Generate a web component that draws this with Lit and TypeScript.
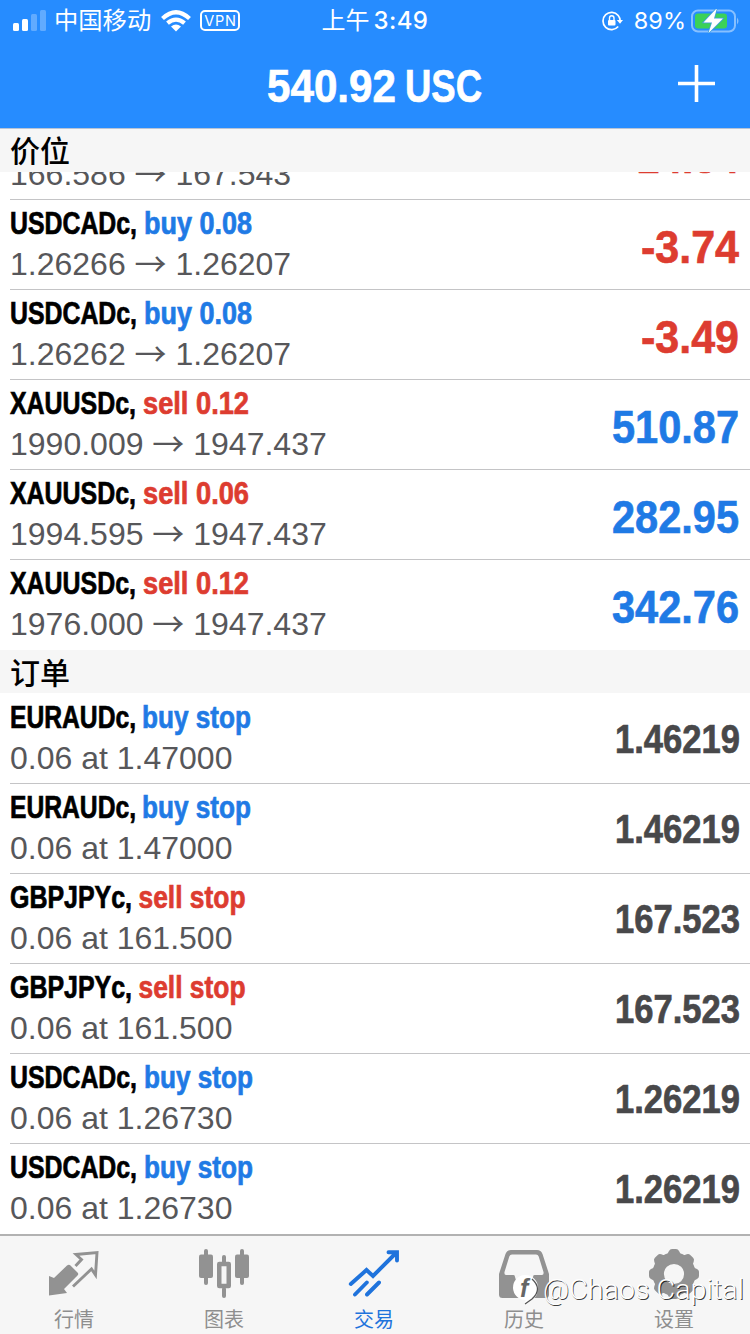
import { LitElement, html, svg, css } from "lit";
import { customElement, property } from "lit/decorators.js";

type Run = { t: string; x: number; w: number; c?: string };

// Condensed bold text: each run is squeezed to its own width.
@customElement("narrow-text")
class NarrowText extends LitElement {
  @property({ attribute: false }) runs: Run[] = [];
  @property({ type: Number }) size = 31;
  @property({ type: Number }) width = 260;
  static styles = css`
    :host { display: block; flex: none; }
    svg { display: block; overflow: visible; }
    text { font-family: "Liberation Sans", Arial, sans-serif; font-weight: 700; stroke-width: 0.7px; white-space: pre; }
    .black { fill: #000; stroke: #000; }
    .blue { fill: #1f7ae5; stroke: #1f7ae5; }
    .red { fill: #dd3c30; stroke: #dd3c30; }
    .gray { fill: #48484a; stroke: #48484a; }
    .white { fill: #fff; stroke: #fff; }
  `;
  render() {
    const h = Math.round(this.size * 1.1);
    return html`<svg width=${this.width} height=${h}>
      ${this.runs.map((r) => svg`<text class=${r.c ?? "black"} x=${r.x} y=${Math.round(this.size * 0.85)} font-size=${this.size} textLength=${r.w} lengthAdjust="spacingAndGlyphs">${r.t}</text>`)}
    </svg>`;
  }
}

type Row = { sym: string; sw: number; act: string; ax: number; aw: number; ac: string; from: string; to?: string; val: string; vw: number; vc: string };

const pos: Row[] = [
  { sym: "GBPJPYc,", sw: 122, act: "buy 0.06", ax: 129, aw: 108, ac: "blue", from: "166.586", to: "167.543", val: "-14.84", vw: 116, vc: "red" },
  { sym: "USDCADc,", sw: 127, act: "buy 0.08", ax: 134, aw: 108, ac: "blue", from: "1.26266", to: "1.26207", val: "-3.74", vw: 98, vc: "red" },
  { sym: "USDCADc,", sw: 127, act: "buy 0.08", ax: 134, aw: 108, ac: "blue", from: "1.26262", to: "1.26207", val: "-3.49", vw: 98, vc: "red" },
  { sym: "XAUUSDc,", sw: 126, act: "sell 0.12", ax: 133, aw: 106, ac: "red", from: "1990.009", to: "1947.437", val: "510.87", vw: 127, vc: "blue" },
  { sym: "XAUUSDc,", sw: 126, act: "sell 0.06", ax: 133, aw: 106, ac: "red", from: "1994.595", to: "1947.437", val: "282.95", vw: 127, vc: "blue" },
  { sym: "XAUUSDc,", sw: 126, act: "sell 0.12", ax: 133, aw: 106, ac: "red", from: "1976.000", to: "1947.437", val: "342.76", vw: 127, vc: "blue" },
];
const order = (sym: string, sw: number, act: string, ax: number, aw: number, ac: string, from: string, val: string): Row => ({ sym, sw, act, ax, aw, ac, from, val, vw: 125, vc: "gray" });
const orders: Row[] = [
  order("EURAUDc,", 126, "buy stop", 132, 109, "blue", "0.06 at 1.47000", "1.46219"),
  order("EURAUDc,", 126, "buy stop", 132, 109, "blue", "0.06 at 1.47000", "1.46219"),
  order("GBPJPYc,", 122, "sell stop", 128.5, 107, "red", "0.06 at 161.500", "167.523"),
  order("GBPJPYc,", 122, "sell stop", 128.5, 107, "red", "0.06 at 161.500", "167.523"),
  order("USDCADc,", 127, "buy stop", 134, 109, "blue", "0.06 at 1.26730", "1.26219"),
  order("USDCADc,", 127, "buy stop", 134, 109, "blue", "0.06 at 1.26730", "1.26219"),
];

const tabs = [
  { label: "行情", icon: svg`<path d="M18 15.500Q20 14 21.500 15.500L28.500 22.500Q30 24 28.500 25.500L15 39L18 43L0 45.500V26L5 28Z" fill="#929292"/><path d="M26.500 16L32.500 9.500L27 4.500L48 2.500L46.500 25L42.500 19L24 36.500" fill="none" stroke="#929292" stroke-width="2.900"/>` },
  { label: "图表", icon: svg`<g fill="#929292"><rect x="0" y="4.500" width="14" height="23.500" rx="2"/><rect x="5" y="-1" width="4" height="36" rx="2"/><rect x="36" y="4.500" width="14" height="23.500" rx="2"/><rect x="41" y="-1" width="4" height="36" rx="2"/><rect x="23" y="5" width="4" height="9" rx="2"/><rect x="23" y="37" width="4" height="11" rx="2"/></g><rect x="20.250" y="14" width="9.500" height="22" fill="none" stroke="#929292" stroke-width="4.500" stroke-linejoin="round"/>` },
  { label: "交易", on: true, icon: svg`<path d="M1.800 34L17.500 20L24 26L47 3M39.500 2.200H48V10.500M6 44.500L17.800 32.500M18 44.500L30 32.500" fill="none" stroke="#1f73dc" stroke-width="3.900" stroke-linecap="round"/>` },
  { label: "历史", icon: svg`<path d="M12 0H38Q42 0 43.500 4L50 24V44.500Q50 48 46.500 48H3.500Q0 48 0 44.500V24L6.500 4Q8 0 12 0ZM13 4.500Q11 4.500 10.300 6.500L5.500 22Q5 25 7 25H14.500Q16 25 16 27Q17 34 25 34T34 27Q34 25 35.500 25H43Q45 25 44.500 22L39.700 6.500Q39 4.500 37 4.500Z" fill="#929292" fill-rule="evenodd"/>` },
  { label: "设置", icon: svg`<circle cx="25" cy="24" r="15.800" fill="none" stroke="#929292" stroke-width="11.400"/><g fill="#929292">${[0, 45, 90, 135, 180, 225, 270, 315].map((a) => svg`<path transform="rotate(${a} 25 24)" d="M16 6Q19 4 20 1Q21 -1 23 -1H27Q29 -1 30 1Q31 4 34 6Z"/>`)}</g>` },
];

@customElement("app-root")
class AppRoot extends LitElement {
  static styles = css`
    :host { display: flex; flex-direction: column; width: 750px; height: 1334px; overflow: hidden; position: relative; background: #fff; font-family: "Liberation Sans", "Noto Sans CJK SC", sans-serif; }
    .status { display: grid; grid-template-columns: 1fr auto 1fr; box-sizing: border-box; height: 40px; padding-top: 1px; align-items: center; background: #268cff; color: #fff; font: 400 24px/39px Inter, "Noto Sans CJK SC", sans-serif; }
    .side { display: flex; align-items: center; height: 39px; }
    .left { padding-left: 13px; }
    .right { justify-content: flex-end; padding-right: 10px; }
    .carrier { margin-left: 7px; width: 99px; white-space: nowrap; font-size: 24.300px; }
    .wifi { margin-left: 8px; }
    .vpn { box-sizing: border-box; width: 40px; height: 21px; margin-left: 9px; border: 2px solid #fff; border-radius: 5px; font-size: 14.500px; line-height: 17px; text-align: center; letter-spacing: .8px; padding-left: 1px; }
    .time { font-weight: 500; letter-spacing: .4px; display: flex; gap: 4px; }
    .time span { font-weight: 400; letter-spacing: 0; }
    .pct { margin: 0 5px 0 11px; font-size: 23.500px; }
    .nav { display: grid; grid-template-columns: 1fr 215px 1fr; height: 88px; background: #268cff; align-items: center; border-bottom: 1px solid #b8c4d6; }
    .amount { padding-top: 7px; }
    .plus { justify-self: end; margin: 0 35px 2px 0; }
    .head { height: 43px; padding-left: 10px; background: #f6f6f6; font: 500 30px/42px "Noto Sans CJK SC", sans-serif; flex: none; }
    .head.first { line-height: 40px; }
    .positions { height: 478px; flex: none; display: flex; flex-direction: column; justify-content: flex-end; overflow: hidden; }
    .orders { margin-top: 1px; flex: 1; overflow: hidden; }
    .row { flex: none; height: 89px; margin-left: 10px; padding-right: 11px; border-bottom: 1px solid #c4c4c6; display: flex; justify-content: space-between; align-items: center; }
    .orders .row { padding-right: 10px; }
    .row:last-child { border-bottom-color: transparent; }
    .text { display: flex; flex-direction: column; height: 89px; box-sizing: border-box; padding-top: 8px; }
    .detail { font-size: 32px; line-height: 36px; margin-top: 4px; color: #57575a; white-space: pre; }
    .arrow { font-family: "Noto Sans CJK SC"; font-weight: 400; line-height: 20px; vertical-align: -1px; }
    .val { padding-top: 9px; }
    .val.gray { padding-top: 4px; }
    .tabs { height: 100px; flex: none; box-sizing: border-box; border-top: 2px solid #b2b2b2; background: #f6f6f6; display: grid; grid-template-columns: repeat(5, 150px); }
    .tab { display: flex; flex-direction: column; align-items: center; padding-top: 14px; padding-right: 2px; font: 20px/28px "Noto Sans CJK SC", sans-serif; color: #8e8e8e; }
    .tab svg { display: block; margin-bottom: 5px; overflow: visible; }
    .on { color: #1f73dc; }
    .mark { position: absolute; left: 512px; top: 1271px; }
    .mark svg { display: block; overflow: visible; }
    .mark .name { font: 300 27px Roboto, sans-serif; fill: #fff; text-shadow: 0.8px 0.8px 0.5px rgba(0, 0, 0, 0.75); }
    .mark .f { font: italic 700 25px "Liberation Sans", sans-serif; fill: #666; }
  `;
  row(r: Row) {
    return html`<div class="row">
      <div class="text">
        <narrow-text .size=${31} .runs=${[{ t: r.sym, x: 0, w: r.sw }, { t: r.act, x: r.ax, w: r.aw, c: r.ac }]}></narrow-text>
        <div class="detail">${r.from}${r.to ? html` <span class="arrow">→</span> ${r.to}` : ""}</div>
      </div>
      <narrow-text class="val ${r.vc}" .size=${r.vc === "gray" ? 41 : 47} .width=${r.vw} .runs=${[{ t: r.val, x: 0, w: r.vw, c: r.vc }]}></narrow-text>
    </div>`;
  }
  render() {
    return html`
      <div class="status">
        <div class="side left">
          <svg width="34" height="22"><g fill="#fff"><rect x="0" y="13" width="6" height="8" rx="1.500"/><rect x="9" y="9" width="6" height="12" rx="1.500"/><g opacity=".27"><rect x="18" y="4" width="6" height="17" rx="1.500"/><rect x="27" y="0" width="6" height="21" rx="1.500"/></g></g></svg>
          <span class="carrier">中国移动</span>
          <svg class="wifi" width="30" height="22" viewBox="0 0 30 22"><path d="M1.500 8.500Q15-4 28.500 8.500M6.500 13.200Q15 6 23.500 13.200" fill="none" stroke="#fff" stroke-width="4.200"/><path d="M10 16.500Q15 12.500 20 16.500L15 21.500Z" fill="#fff"/></svg>
          <span class="vpn">VPN</span>
        </div>
        <div class="time"><span>上午</span>3:49</div>
        <div class="side right">
          <svg width="21" height="20" viewBox="0 0 21 20"><path d="M16.200 4.500A8.600 8.600 0 1 0 16.200 15.500M18.200 10A8.600 8.600 0 0 0 16.200 4.500" fill="none" stroke="#fff" stroke-width="1.700"/><path d="M14.800 9H21L18 12.800Z" fill="#fff"/><rect x="6" y="9" width="7.500" height="5.500" rx="1" fill="#fff"/><path d="M7.500 9V7a2.200 2.200 0 0 1 4.500 0V9" fill="none" stroke="#fff" stroke-width="1.400"/></svg>
          <span class="pct">89%</span>
          <svg width="49" height="24" viewBox="0 0 49 24"><rect x="1" y="1.500" width="43" height="21" rx="6" fill="none" stroke="#fff" stroke-opacity=".45" stroke-width="2"/><path d="M46 8.500q3 3.500 0 7z" fill="#fff" opacity=".45"/><rect x="4" y="4.500" width="32" height="15" rx="3" fill="#3bd158"/><path d="M26-1L12.500 13.500H21L17.500 24L32 9.500H23Z" fill="#fff" stroke="#3f9fe0" stroke-width="1.600" paint-order="stroke"/></svg>
        </div>
      </div>
      <div class="nav"><i></i><narrow-text class="amount" .size=${47} .width=${215} .runs=${[{ t: "540.92", x: -1, w: 129, c: "white" }, { t: "USC", x: 137, w: 77, c: "white" }]}></narrow-text>
        <svg class="plus" width="37" height="37"><path d="M18.500 0V37M0 18.500H37" stroke="#fff" stroke-width="3.600"/></svg></div>
      <div class="head first">价位</div>
      <div class="positions">${pos.map((r) => this.row(r))}</div>
      <div class="head">订单</div>
      <div class="orders">${orders.map((r) => this.row(r))}</div>
      <div class="tabs">${tabs.map((t) => html`<div class="tab ${t.on ? "on" : ""}"><svg width="50" height="50">${t.icon}</svg>${t.label}</div>`)}</div>
      <div class="mark"><svg width="234" height="36"><path d="M13 4A12.500 12.500 0 1 0 14 29L12 33Q26 29 26 17A12.800 12.800 0 0 0 13 4Z" fill="#fff"/><text class="f" x="8" y="26">f</text><path d="M20 8Q31 18 20 28L13 33" fill="none" stroke="#555" stroke-width="1.300"/><text class="name" x="31" y="28" textLength="201" lengthAdjust="spacingAndGlyphs">@Chaos Capital</text></svg></div>
    `;
  }
}
